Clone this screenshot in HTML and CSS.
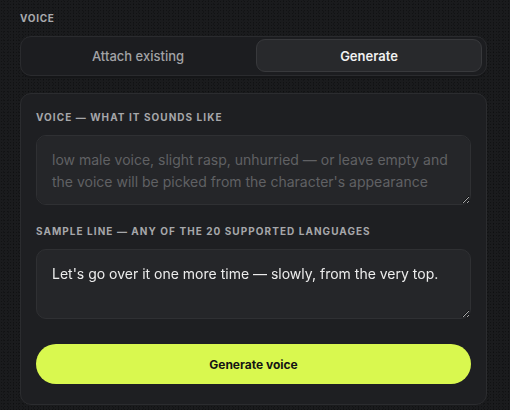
FILE: index.html
```html
<!DOCTYPE html>
<html lang="en">
<head>
<meta charset="utf-8">
<link rel="stylesheet" href="styles.css">
</head>
<body>
<div class="page">
  <div class="section-title">VOICE</div>
  <div class="segmented">
    <button class="seg">Attach existing</button>
    <button class="seg active">Generate</button>
  </div>
  <div class="panel">
    <div class="field-label">VOICE — WHAT IT SOUNDS LIKE</div>
    <textarea class="field" placeholder="low male voice, slight rasp, unhurried — or leave empty and the voice will be picked from the character's appearance"></textarea>
    <div class="field-label second">SAMPLE LINE — ANY OF THE 20 SUPPORTED LANGUAGES</div>
    <textarea class="field">Let's go over it one more time — slowly, from the very top.</textarea>
    <button class="primary">Generate voice</button>
  </div>
</div>
</body>
</html>
```
FILE: styles.css
```css
html, body {
  margin: 0;
  padding: 0;
  background-color: #1a1b1d;
  background-image:
    radial-gradient(rgba(0,0,0,0.35) 0.6px, transparent 0.8px),
    radial-gradient(rgba(0,0,0,0.25) 0.6px, transparent 0.8px);
  background-size: 3px 3px, 5px 4px;
  background-position: 0 0, 1px 2px;
  font-family: Inter, "Noto Sans", "Liberation Sans", sans-serif;
  color: #e6e6e6;
}

.page {
  padding: 12px 23px 0 20px;
}

.section-title {
  font-size: 10px;
  font-weight: 700;
  letter-spacing: 0.07em;
  color: #a9aaad;
  line-height: 12px;
  margin-bottom: 12px;
}

.segmented {
  display: grid;
  grid-template-columns: 1fr 1fr;
  gap: 5px;
  height: 40px;
  box-sizing: border-box;
  padding: 2px 4px 3px 4px;
  border: 1px solid #2a2b2e;
  border-radius: 11px;
  background: #1c1d20;
  box-shadow: 0 3px 0 -1px #151618;
}

.seg {
  font-family: inherit;
  font-size: 13px;
  font-weight: 500;
  color: #a2a3a6;
  background: transparent;
  border: 1px solid transparent;
  border-radius: 9px;
  padding: 0;
  cursor: pointer;
}

.seg.active {
  color: #f1f1f1;
  font-weight: 600;
  background: #28292c;
  border-color: #38393c;
}

.panel {
  margin-top: 17px;
  background: #1e1f22;
  border: 1px solid #2b2c2f;
  border-radius: 11px;
  padding: 16px 15px 20px 15px;
  display: flex;
  flex-direction: column;
}

.field-label {
  font-size: 10px;
  font-weight: 700;
  letter-spacing: 1.05px;
  color: #a6a7aa;
  line-height: 14px;
  margin-bottom: 11px;
}

.field-label.second {
  margin-top: 19px;
}

.field {
  display: block;
  box-sizing: border-box;
  width: 100%;
  height: 70px;
  font-family: inherit;
  font-size: 14px;
  line-height: 22px;
  color: #ececec;
  background: #252629;
  border: 1px solid #2f3033;
  border-radius: 10px;
  padding: 13px 15px 12px 15px;
  outline: none;
}

.field::placeholder {
  color: #606164;
}

.primary {
  margin-top: 25px;
  height: 40px;
  border: none;
  border-radius: 20px;
  background: #d9f84f;
  color: #141414;
  font-family: inherit;
  font-size: 12px;
  font-weight: 700;
  cursor: pointer;
}
```
